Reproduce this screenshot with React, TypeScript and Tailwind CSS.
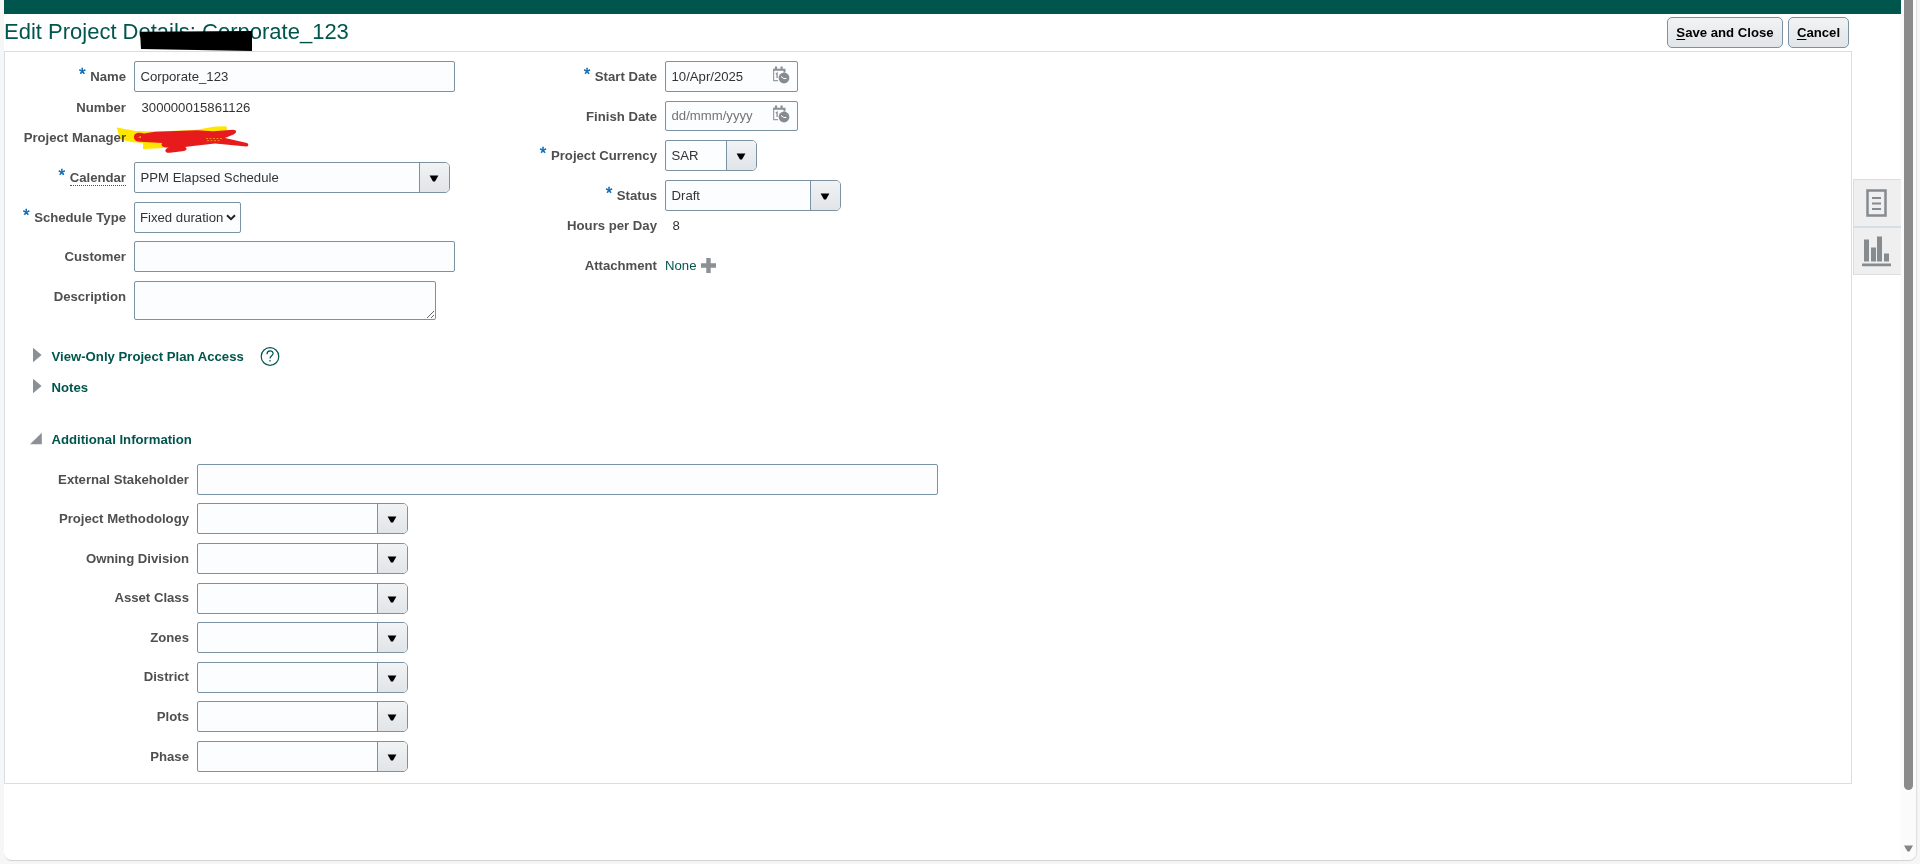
import type { ReactNode } from "react";

function Caret() {
  return (
    <svg width="10" height="7" viewBox="0 0 10 7">
      <path d="M.6 .6h8.8L6 6.6H4z" fill="#000" />
    </svg>
  );
}

function Row({
  label,
  required,
  dotted,
  labelClass = "w-[122px]",
  className = "h-[31px]",
  children,
}: {
  label: string;
  required?: boolean;
  dotted?: boolean;
  labelClass?: string;
  className?: string;
  children?: ReactNode;
}) {
  return (
    <div className={`flex ${className}`}>
      <div className={`flex h-[31px] shrink-0 items-center justify-end font-bold text-[#4f4f4f] ${labelClass}`}>
        {required && <span className="mr-[4.5px] h-[31px] text-[17px] leading-[27px] font-normal text-[#0567b5] [-webkit-text-stroke:0.4px_#0567b5]">*</span>}
        <span className={dotted ? "border-b border-dotted border-[#4f4f4f] leading-[15px]" : ""}>{label}</span>
      </div>
      <div className="ml-2 flex items-center">{children}</div>
    </div>
  );
}

function Box({ className, children }: { className: string; children?: ReactNode }) {
  return (
    <div className={`flex items-center rounded-[2px] border border-[#7b92a3] bg-[#fcfdfe] pl-[5.5px] ${className}`}>
      {children}
    </div>
  );
}

function Combo({ className, value }: { className: string; value?: string }) {
  return (
    <div className={`flex h-[31px] rounded-l-[2px] rounded-r-[5px] border border-[#7b92a3] bg-[#fcfdfe] ${className}`}>
      <div className="flex grow items-center pl-[5.5px]">{value}</div>
      <div className="flex w-[30px] items-center justify-center rounded-r-[4px] border-l border-[#7b92a3] bg-linear-to-b from-[#f1f3f4] to-[#e1e5e8] pt-0.5 pr-[2px]">
        <Caret />
      </div>
    </div>
  );
}

function DateIcon() {
  return (
    <svg className="mb-[3px]" width="18" height="18" viewBox="0 0 18 18" fill="none" stroke="#8b9095">
      <path d="M1.6 4v10.6H6" strokeWidth="1.2" stroke="#9a9ea3" />
      <path d="M1 3.800h11.500V6.500" strokeWidth="2" />
      <path d="M4 .5V4M9.600.5V4" strokeWidth="2.200" />
      <path d="M3.800 8l1.300-.8V12" strokeWidth="1.300" />
      <circle cx="12" cy="12" r="5.400" fill="#868b90" stroke="none" />
      <path d="M9 10.500l2.800 2h2.600" stroke="#fff" strokeWidth="1" />
    </svg>
  );
}

function Section({ title, open, className, children }: { title: string; open?: boolean; className: string; children?: ReactNode }) {
  return (
    <div className={`flex h-5 items-center pl-[24px] font-bold text-[#00554d] ${className}`}>
      <svg width="14" height="16" viewBox="0 0 14 16" className="mr-[8.5px] -translate-y-px">
        <path d={open ? "M1 14.300L12.800 2.800v11.500z" : "M4 .8L12.600 8 4 15.200z"} fill="#8b9097" />
      </svg>
      <span className="pt-px">{title}</span>
      {children}
    </div>
  );
}

const attributes = ["Project Methodology", "Owning Division", "Asset Class", "Zones", "District", "Plots", "Phase"];

export default function App() {
  return (
    <div className="flex h-[864px] w-[1920px] overflow-hidden bg-[#f6f6f6] pb-[3px] pl-[4px] font-['Liberation_Sans',Arial,sans-serif] text-[13.17px] text-[#333]">
      <div className="flex w-[1912px] overflow-hidden rounded-b-[8px] border-b border-[#d4d4d4] bg-white shadow-[1px_0_1px_#ddd]">
        <div className="w-[1897px]">
          <div className="h-[14px] bg-[#00554d]" />
          <header className="relative flex h-[37px] items-start justify-between pr-[52px]">
            <h1 className="pt-[5px] text-[22px] leading-[26px] text-[#00554d]">Edit Project Details: Corporate_123</h1>
            <svg className="absolute top-[17px] left-[136px]" width="113" height="21" viewBox="0 0 113 21">
              <path d="M0 .8L112 0v20L1 18z" fill="#000" />
            </svg>
            <div className="flex gap-[5px] pt-[3px] font-bold text-black">
              <button className="h-[31px] w-[116px] rounded-[5px] border border-[#7b92a3] bg-linear-to-b from-[#f1f3f4] to-[#e1e5e8]">
                <span className="underline underline-offset-2">S</span>ave and Close
              </button>
              <button className="h-[31px] w-[61px] rounded-[5px] border border-[#7b92a3] bg-linear-to-b from-[#f1f3f4] to-[#e1e5e8]">
                <span className="underline underline-offset-2">C</span>ancel
              </button>
            </div>
          </header>
          <div className="flex">
            <main className="h-[733px] w-[1848px] border border-[#d6dfe6]">
              <div className="flex h-[268px] pt-[9px]">
                <div className="-ml-px w-[521px]">
                  <Row label="Name" required>
                    <Box className="h-[31px] w-[321px]">Corporate_123</Box>
                  </Row>
                  <Row label="Number" className="h-[30px]">
                    <span className="pt-px pl-[7.5px]">300000015861126</span>
                  </Row>
                  <div className="relative">
                    <Row label="Project Manager" className="h-[40px]" />
                    <svg className="absolute top-1 left-[112px] mix-blend-multiply" width="140" height="28" viewBox="0 0 140 28">
                      <path d="M.7 1.500L20 5l19 .5L79 4l20-3.500 11-.3 1 1.800-3 11-60 9-21 1V17l-10-.7-7-1.500L4 13z" fill="#ffe600" />
                    </svg>
                    <svg className="absolute top-1 left-[112px]" width="140" height="28" viewBox="0 0 140 28" fill="#e81b1c">
                      <path d="M18 11c0-5 6-5 10-3.500L39 5.700l42-1.400 16 1 20-1.500c4 .3 4 2.800 1 4.500l-9 3.700 22 5c2 1 1.500 3.500-.5 3.500L99 17.600l-22 2.400-8 1c3 1 1 4-1 4l-14 1.800c-6 .5-6-4-1-5.300-6 0-8.500-1-7-4.500L24 15.700c-4 .2-6-2-6-4.700z" />
                      <path d="M22 11.300l3-1v1.500z" fill="#ffe600" />
                      <path d="M90 12.500h17M91 14.700h14" stroke="#f48b16" strokeDasharray="2 1.5" />
                    </svg>
                  </div>
                  <Row label="Calendar" required dotted>
                    <Combo className="w-[316px]" value="PPM Elapsed Schedule" />
                  </Row>
                  <Row label="Schedule Type" required className="mt-[9px] h-[31px]">
                    <Box className="h-[31px] w-[107px]">
                      <span className="-ml-[0.5px] whitespace-nowrap">Fixed duration</span>
                      <svg className="ml-[3px] shrink-0" width="10" height="7" viewBox="0 0 10 7">
                        <path d="M1 1.200l4 4 4-4" fill="none" stroke="#222" strokeWidth="2" />
                      </svg>
                    </Box>
                  </Row>
                  <Row label="Customer" className="mt-[8px] h-[31px]">
                    <Box className="h-[31px] w-[321px]" />
                  </Row>
                  <Row label="Description" className="mt-[9px] h-[39px]">
                    <Box className="h-[39px] w-[302px] items-end justify-end">
                      <svg width="9" height="9" viewBox="0 0 9 9">
                        <path d="M1 8l7-7M5 8l3-3" stroke="#666" />
                      </svg>
                    </Box>
                  </Row>
                </div>
                <div>
                  <Row label="Start Date" required labelClass="w-[132px]">
                    <Box className="h-[31px] w-[133px] justify-between pr-[7px]">
                      10/Apr/2025 <DateIcon />
                    </Box>
                  </Row>
                  <Row label="Finish Date" labelClass="w-[132px]" className="mt-[9px] h-[30px]">
                    <Box className="h-[30px] w-[133px] justify-between pr-[7px] pb-px text-[#757575]">
                      dd/mmm/yyyy <DateIcon />
                    </Box>
                  </Row>
                  <Row label="Project Currency" required labelClass="w-[132px]" className="mt-[9px] h-[31px]">
                    <Combo className="w-[92px]" value="SAR" />
                  </Row>
                  <Row label="Status" required labelClass="w-[132px]" className="mt-[9px] h-[31px]">
                    <Combo className="w-[176px]" value="Draft" />
                  </Row>
                  <Row label="Hours per Day" labelClass="w-[132px]" className="-mt-px h-[31px]">
                    <span className="pl-[7.5px]">8</span>
                  </Row>
                  <Row label="Attachment" labelClass="w-[132px]" className="mt-[9px] h-[31px]">
                    <span className="text-[#00554d]">None</span>
                    <svg className="ml-[5px]" width="15" height="15" viewBox="0 0 15 15">
                      <path d="M5.300 0h4.400v5.300H15v4.400H9.700V15H5.300V9.700H0V5.300h5.300z" fill="#8b9095" />
                    </svg>
                  </Row>
                </div>
              </div>
              <Section title="View-Only Project Plan Access" className="mt-[26px]">
                <svg className="ml-[16px]" width="20" height="20" viewBox="0 0 20 20" fill="none" stroke="#00554d" strokeWidth="1.2">
                  <circle cx="10" cy="10.500" r="8.800" />
                  <path d="M7 8.200c0-4.300 6.100-4.200 6.100-.6 0 2.200-3.100 2.300-3.100 5M10 14v1.600" />
                </svg>
              </Section>
              <Section title="Notes" className="mt-[11px]" />
              <Section title="Additional Information" open className="mt-[32px]" />
              <div className="mt-[14.9px] -ml-px">
                <Row label="External Stakeholder" labelClass="w-[185px]" className="h-[39.58px] items-start">
                  <Box className="h-[31px] w-[741px]" />
                </Row>
                {attributes.map((name) => (
                  <Row key={name} label={name} labelClass="w-[185px]" className="h-[39.58px] items-start">
                    <Combo className="w-[211px]" />
                  </Row>
                ))}
              </div>
            </main>
            <aside className="mt-[128px] ml-px h-[96px] w-[48px] border border-r-0 border-[#dcdfe2] bg-[#efefef]">
              <div className="flex h-[48px] items-center justify-center border-b-2 border-[#d6dfe6] pr-[3px]">
                <svg width="21" height="28" viewBox="0 0 21 28" fill="none" stroke="#868b90">
                  <path d="M1.500 1.500h18v25h-18z" strokeWidth="2.500" />
                  <path d="M6 9h9M6 14.500h9M6 20h9" strokeWidth="2.200" />
                </svg>
              </div>
              <div className="flex h-[46px] items-center justify-center pr-[2px]">
                <svg width="29" height="31" viewBox="0 0 29 31" fill="#868b90">
                  <path d="M2 3.500h5v22H2zM9 11.500h5v14H9zM15 .5h5v25h-5zM22 17.500h5v8h-5zM0 27.500h29v2.700H0z" />
                </svg>
              </div>
            </aside>
          </div>
        </div>
        <div className="flex w-[15px] flex-col items-center justify-between bg-[#fbfbfb] pb-[8px]">
          <div className="h-[790px] w-[9px] rounded-b-full bg-[#8b8b8b]" />
          <svg width="9" height="7" viewBox="0 0 9 7">
            <path d="M0 .5h9L5.500 6.500h-2z" fill="#858585" />
          </svg>
        </div>
      </div>
    </div>
  );
}
